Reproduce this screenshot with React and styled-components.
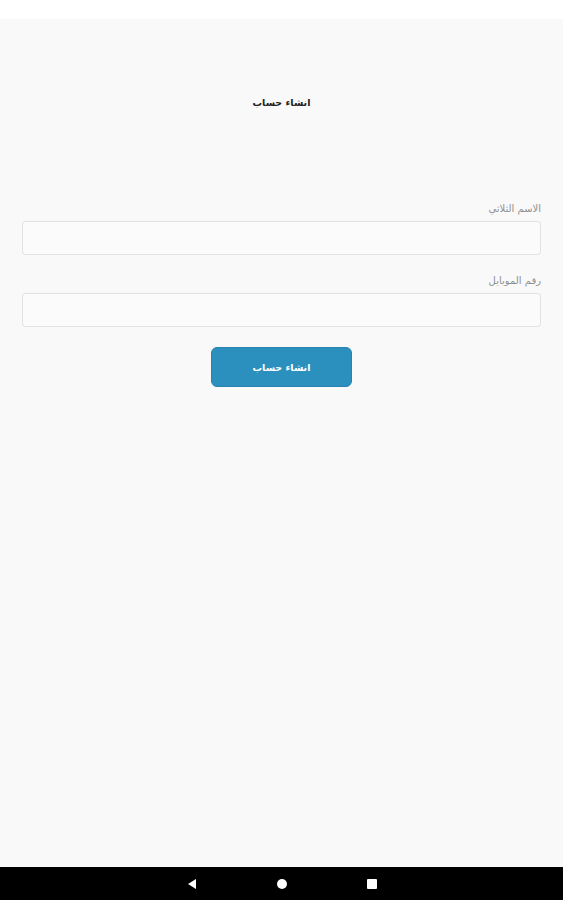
import React from "react";
import styled, { createGlobalStyle } from "styled-components";

const Global = createGlobalStyle`
  html, body { margin: 0; padding: 0; }
  body { font-family: "DejaVu Sans", "Noto Sans", sans-serif; background: #f9f9f9; }
  * { box-sizing: border-box; }
`;

const Screen = styled.div`
  width: 563px;
  height: 900px;
  display: flex;
  flex-direction: column;
  background: #f9f9f9;
`;

const StatusBar = styled.div`
  height: 19px;
  background: #ffffff;
  flex: none;
`;

const Main = styled.main`
  flex: 1;
  display: flex;
  flex-direction: column;
  padding: 0 22px;
  direction: rtl;
`;

const Title = styled.h1`
  margin: 76px 0 0;
  height: 16px;
  line-height: 16px;
  text-align: center;
  font-size: 9.5px;
  font-weight: bold;
  color: #222;
`;

const Form = styled.form`
  margin-top: 91px;
  display: flex;
  flex-direction: column;
`;

const Field = styled.div`
  display: flex;
  flex-direction: column;
  margin-bottom: ${(p) => p.$mb}px;
`;

const Label = styled.label`
  font-size: 10px;
  line-height: 14px;
  height: 14px;
  color: #909090;
  margin-bottom: 5px;
`;

const Input = styled.input`
  height: 34px;
  width: 100%;
  border: 1.5px solid #e2e2e2;
  border-radius: 3px;
  background: #fbfbfb;
  outline: none;
`;

const Button = styled.button`
  align-self: center;
  width: 141px;
  height: 40px;
  margin-top: 20px;
  border: 1px solid #2784b0;
  border-radius: 6px;
  background: #2b90be;
  color: #fff;
  font-family: "DejaVu Sans", sans-serif;
  font-size: 9.5px;
  font-weight: bold;
`;

const NavBar = styled.nav`
  height: 33px;
  background: #000;
  flex: none;
  display: flex;
  align-items: center;
  justify-content: center;
  gap: 78px;
`;

const NavIcon = styled.svg`
  width: 12px;
  height: 12px;
  display: block;
`;

export default function App() {
  return (
    <>
      <Global />
      <Screen>
        <StatusBar />
        <Main>
          <Title>انشاء حساب</Title>
          <Form onSubmit={(e) => e.preventDefault()}>
            <Field $mb={19}>
              <Label>الاسم الثلاثي</Label>
              <Input type="text" />
            </Field>
            <Field $mb={0}>
              <Label>رقم الموبايل</Label>
              <Input type="tel" />
            </Field>
            <Button type="submit">انشاء حساب</Button>
          </Form>
        </Main>
        <NavBar>
          <NavIcon viewBox="0 0 12 12">
            <path d="M10 1 L2 6 L10 11 Z" fill="#fff" />
          </NavIcon>
          <NavIcon viewBox="0 0 12 12">
            <circle cx="6" cy="6" r="5" fill="#fff" />
          </NavIcon>
          <NavIcon viewBox="0 0 12 12">
            <rect x="1" y="1" width="10" height="10" rx="1" fill="#fff" />
          </NavIcon>
        </NavBar>
      </Screen>
    </>
  );
}
